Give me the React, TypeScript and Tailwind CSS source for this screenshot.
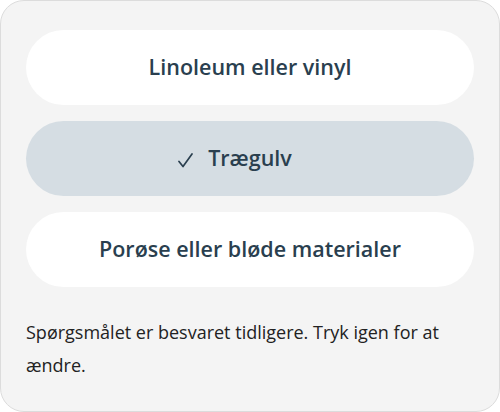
const options = [
  { label: 'Linoleum eller vinyl', selected: false },
  { label: 'Trægulv', selected: true },
  { label: 'Porøse eller bløde materialer', selected: false },
];

function Tick() {
  return (
    <svg width="15" height="15" viewBox="0 0 15 15" className="absolute right-full top-1/2 mr-[15px] -translate-y-[6px]" fill="none">
      <path d="M1 8.5 L5 13.5 L14 1" stroke="#2a3f4f" strokeWidth="1.7" strokeLinecap="round" strokeLinejoin="round" />
    </svg>
  );
}

export default function App() {
  return (
    <div className="h-[412px] w-[500px] font-['Open_Sans',sans-serif]">
      <div className="flex h-full flex-col rounded-[24px] border border-[#dcdcdc] bg-[#f4f4f4] px-[25px] pt-[29px]">
        <div className="flex flex-col gap-[16px]">
          {options.map((o) => (
            <button
              key={o.label}
              className={`flex h-[75px] items-center justify-center rounded-full text-[21.5px] font-semibold text-[#2a3f4f] ${
                o.selected ? 'bg-[#d5dde3]' : 'bg-white'
              }`}
            >
              <span className="relative">
                {o.selected && <Tick />}
                {o.label}
              </span>
            </button>
          ))}
        </div>
        <p className="mt-[29px] text-[18px] leading-[33px] text-[#222]">
          Spørgsmålet er besvaret tidligere. Tryk igen for at ændre.
        </p>
      </div>
    </div>
  );
}
